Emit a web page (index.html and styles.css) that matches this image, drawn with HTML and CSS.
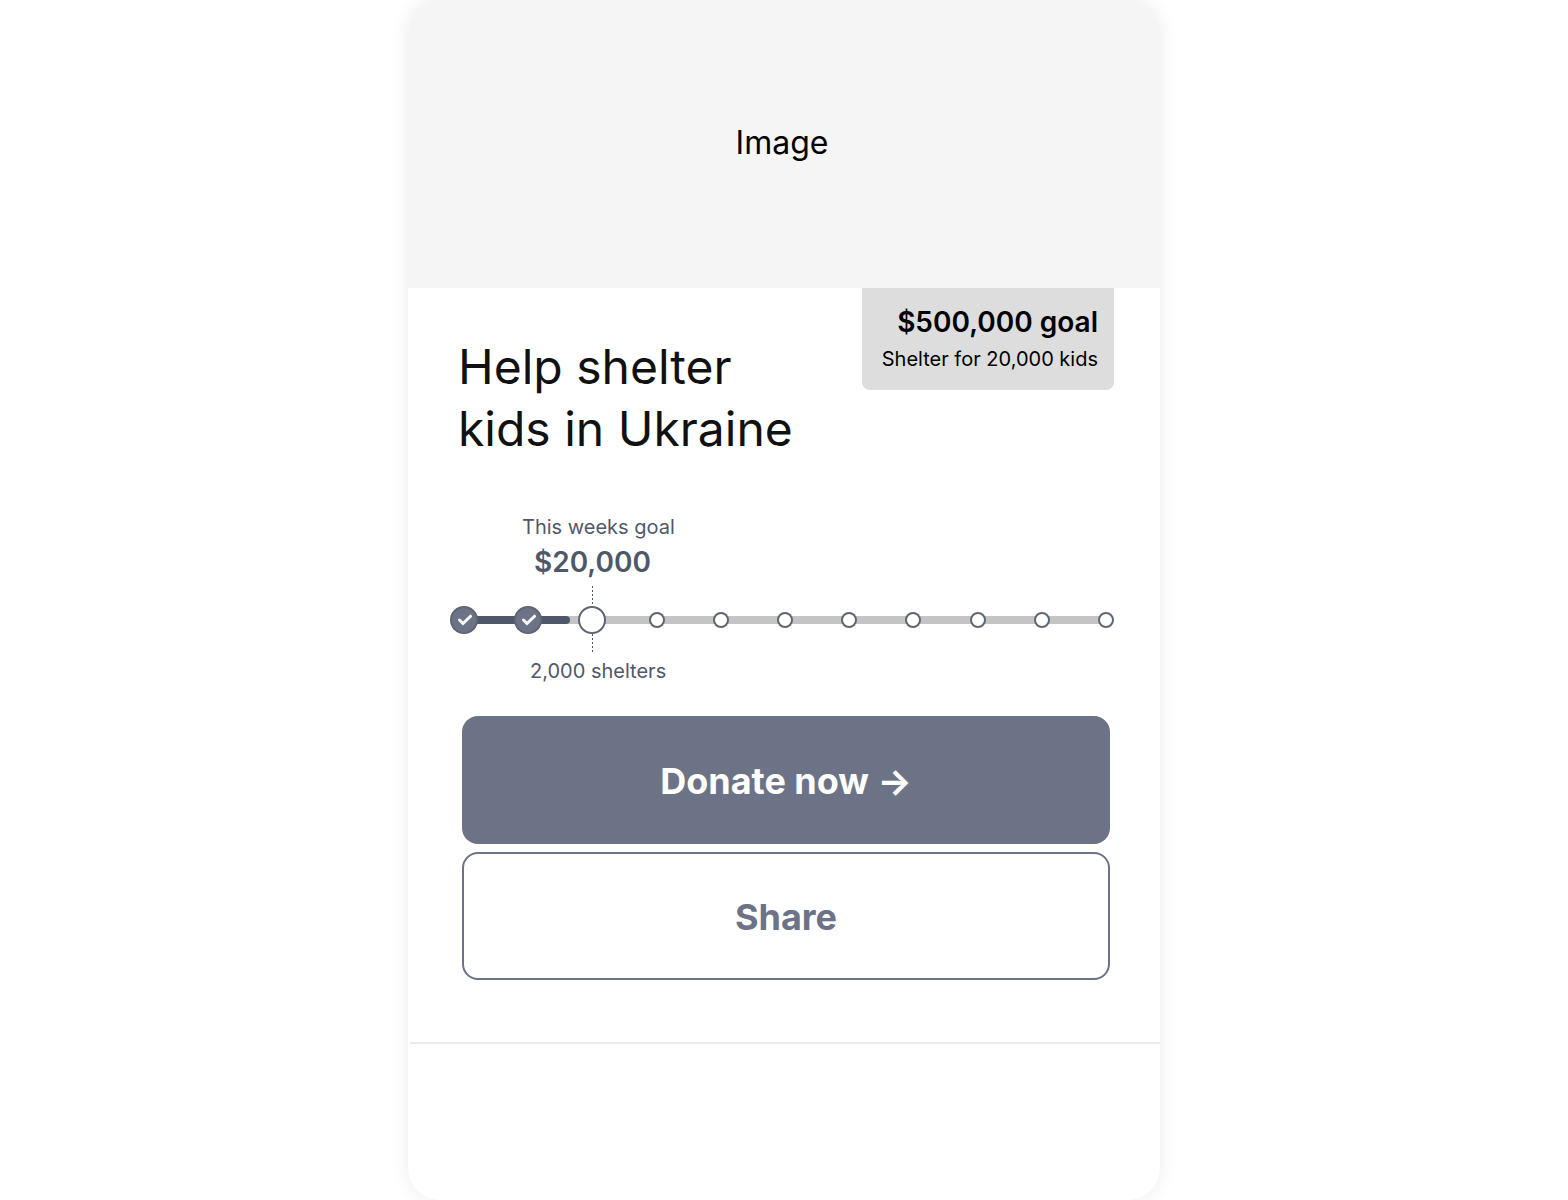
FILE: index.html
```html
<!DOCTYPE html>
<html lang="en">

<head>
    <meta charset="UTF-8">
    <meta name="viewport" content="width=device-width, initial-scale=1.0">
    <title>Help shelter kids in Ukraine</title>

    <link rel="stylesheet" href="styles.css">
</head>

<body>
    <main class="card">
        <div class="hero">Image</div>

        <header class="intro">
            <h1>Help shelter<br>kids in Ukraine</h1>
            <div class="badge">
                <strong>$500,000 goal</strong>
                <span>Shelter for 20,000 kids</span>
            </div>
        </header>

        <section class="progress">
            <div class="goal">
                <p>This weeks goal</p>
                <p class="amount">$20,000</p>
            </div>

            <div class="tracker">
                <div class="line">
                    <div class="fill"></div>
                </div>
                <ol class="steps">
                    <li class="step done">
                        <svg viewBox="0 0 28 28"><path d="M9.5 14 L13 17.5 L20.5 10.2"/></svg>
                    </li>
                    <li class="step done">
                        <svg viewBox="0 0 28 28"><path d="M9.5 14 L13 17.5 L20.5 10.2"/></svg>
                    </li>
                    <li class="step current"></li>
                    <li class="step"></li>
                    <li class="step"></li>
                    <li class="step"></li>
                    <li class="step"></li>
                    <li class="step"></li>
                    <li class="step"></li>
                    <li class="step"></li>
                    <li class="step"></li>
                </ol>
            </div>

            <p class="shelters">2,000 shelters</p>
        </section>

        <div class="actions">
            <button type="button" class="btn btn-primary">Donate now →</button>
            <button type="button" class="btn btn-outline">Share</button>
        </div>

        <hr>
    </main>
</body>

</html>
```
FILE: styles.css
```css
* {
    margin: 0;
    padding: 0;
    box-sizing: border-box;
}

body {
    background-color: white;
    font-family: Inter, "Liberation Sans", sans-serif;
}

.card {
    max-width: 752px;
    min-height: 100vh;
    margin: 0 auto;
    background-color: white;
    border-radius: 32px;
    box-shadow: 0 0 20px rgba(0, 0, 0, 0.08);
    overflow: hidden;
}

.hero {
    display: flex;
    align-items: center;
    justify-content: center;
    height: 288px;
    padding: 0 4px 4px 0;
    background-color: #f5f5f5;
    font-size: 32px;
    color: black;
}

.intro {
    display: flex;
    justify-content: space-between;
    align-items: flex-start;
    padding: 0 46px 0 50px;
}

h1 {
    padding-top: 48px;
    font-size: 48px;
    font-weight: 400;
    line-height: 62px;
    color: #111;
}

.badge {
    display: flex;
    flex-direction: column;
    gap: 4px;
    padding: 16px 16px 16px 20px;
    background-color: #ddd;
    border-radius: 0 0 8px 8px;
    text-align: right;
    font-size: 20px;
    line-height: 30px;
    color: black;
}

.badge strong {
    font-size: 28px;
    font-weight: 600;
    line-height: 36px;
}

.progress {
    padding: 52px 46px 0 48px;
    font-size: 20px;
    line-height: 30px;
    color: #4f586b;
}

.goal {
    margin-left: 66px;
}

.amount {
    padding-left: 12px;
    font-size: 28px;
    font-weight: 600;
    line-height: 40px;
}

/* line and steps share one cell */
.tracker {
    display: grid;
    align-items: center;
    margin: 24px 0 22px;
}

.line,
.steps {
    grid-area: 1 / 1;
}

.line {
    height: 8px;
    margin: 0 8px;
    background-color: #c4c4c4;
}

.fill {
    width: 16.5%;
    height: 100%;
    background-color: #4f586b;
    border-radius: 0 4px 4px 0;
}

.steps {
    display: flex;
    justify-content: space-between;
    align-items: center;
    list-style: none;
}

.step {
    width: 16px;
    height: 16px;
    background-color: white;
    border: 2px solid #5f6672;
    border-radius: 50%;
}

.done,
.current {
    position: relative;
    width: 28px;
    height: 28px;
    margin: 0 -6px;
}

.done {
    background-color: #6c7386;
}

.done svg {
    display: block;
    width: 28px;
    height: 28px;
    margin: -2px;
    fill: none;
    stroke: white;
    stroke-width: 3;
    stroke-linecap: round;
}

/* dotted leaders to the goal and shelters labels */
.current::before,
.current::after {
    content: "";
    position: absolute;
    left: 12px;
    width: 1px;
    height: 20px;
    background: repeating-linear-gradient(#4f586b 0 2px, transparent 2px 4px);
}

.current::before {
    bottom: 100%;
    margin-bottom: 2px;
}

.current::after {
    top: 100%;
    margin-top: 2px;
}

.shelters {
    padding-left: 74px;
}

.actions {
    display: flex;
    flex-direction: column;
    gap: 8px;
    padding: 30px 50px 62px 54px;
}

.btn {
    height: 128px;
    padding-top: 2px;
    border: 2px solid #6c7386;
    border-radius: 16px;
    font-family: inherit;
    font-size: 36px;
    font-weight: 700;
    cursor: pointer;
}

.btn-primary {
    background-color: #6c7386;
    color: white;
}

.btn-outline {
    background-color: white;
    color: #6c7386;
}

hr {
    margin-left: 2px;
    border: none;
    border-top: 2px solid #ebecf1;
}
```
